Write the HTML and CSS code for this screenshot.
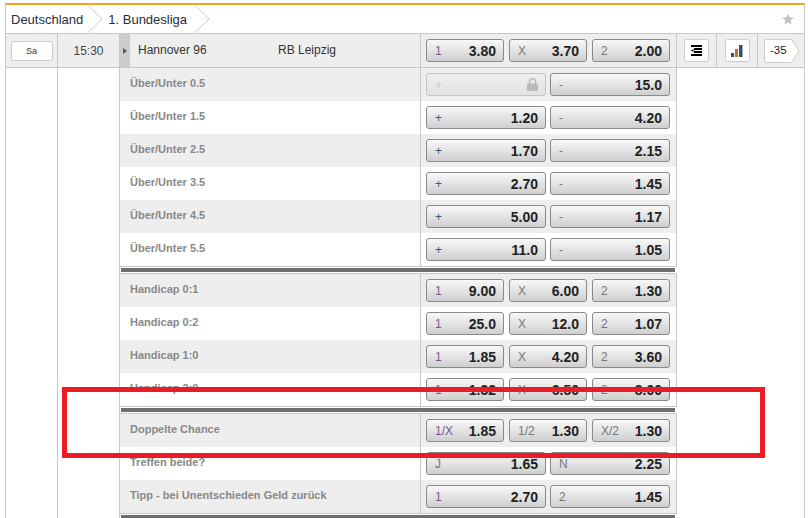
FILE: index.html
```html
<!DOCTYPE html>
<html lang="de">
<head>
<meta charset="utf-8">
<title>1. Bundesliga</title>
<link rel="stylesheet" href="styles.css">
</head>
<body>
<div class="panel">
  <div class="crumbs">
    <span class="crumb">Deutschland</span>
    <svg class="chev" width="16" height="28" viewBox="0 0 16 28"><path d="M0.500 0 L15 14 L0.500 28" fill="none" stroke="#ccc"/></svg>
    <span class="crumb">1. Bundesliga</span>
    <svg class="chev" width="16" height="28" viewBox="0 0 16 28"><path d="M0.500 0 L15 14 L0.500 28" fill="none" stroke="#ccc"/></svg>
    <svg class="star" width="12" height="12" viewBox="0 0 14 14"><path d="M7 0.500 L8.900 5 L13.800 5.400 L10.100 8.600 L11.200 13.500 L7 10.900 L2.800 13.500 L3.900 8.600 L0.200 5.400 L5.100 5 Z" fill="#c0c2c6"/></svg>
  </div>
  <div class="match">
    <div class="c-day"><span class="day">Sa</span></div>
    <div class="c-time">15:30</div>
    <div class="c-tog"><span class="tri"></span></div>
    <div class="c-teams"><span class="home">Hannover 96</span><span class="away">RB Leipzig</span></div>
    <div class="c-odds">
      <div class="btn"><span class="k one">1</span><b>3.80</b></div>
      <div class="btn"><span class="k">X</span><b>3.70</b></div>
      <div class="btn"><span class="k">2</span><b>2.00</b></div>
    </div>
    <div class="c-icon"><span class="ibtn"><svg width="11" height="11" viewBox="0 0 11 11"><path d="M0 0h11v2H0zM3 3h8v2H3zM3 6h8v2H3zM0 9h11v2H0z" fill="#000"/><path d="M0 5.500l2.500-1.500v3z" fill="#000"/></svg></span></div>
    <div class="c-icon c-chart"><span class="ibtn"><svg width="12" height="12" viewBox="0 0 12 12"><rect x="0" y="8" width="3" height="4" fill="#3a5068"/><rect x="4" y="4" width="3" height="8" fill="#b5752e"/><rect x="8" y="0" width="3.500" height="12" fill="#3a5068"/></svg></span></div>
    <div class="c-more"><span class="more"><svg class="tag" width="36" height="24" viewBox="0 0 36 24"><path d="M2.500.5H27.500L35 12 27.500 23.500H2.500a2 2 0 0 1-2-2v-19a2 2 0 0 1 2-2z" fill="#fff" stroke="#ccc"/></svg><span class="more-txt">-35</span></span></div>
  </div>
  <div class="body">
    <div class="gutter g1"></div>
    <div class="gutter g2"></div>
    <div class="markets">
      <div class="group">
        <div class="row"><div class="lbl">Über/Unter 0.5</div><div class="odds two"><div class="btn off"><span class="k">+</span><svg width="11" height="13" viewBox="0 0 11 13"><path d="M2.500 6V3.500a3 3 0 0 1 6 0V6" fill="none" stroke="#bbb" stroke-width="1.500"/><rect x="0" y="5.500" width="11" height="7.500" rx="1" fill="#bbb"/></svg></div><div class="btn"><span class="k">-</span><b>15.0</b></div></div></div>
        <div class="row"><div class="lbl">Über/Unter 1.5</div><div class="odds two"><div class="btn"><span class="k plus">+</span><b>1.20</b></div><div class="btn"><span class="k">-</span><b>4.20</b></div></div></div>
        <div class="row"><div class="lbl">Über/Unter 2.5</div><div class="odds two"><div class="btn"><span class="k plus">+</span><b>1.70</b></div><div class="btn"><span class="k">-</span><b>2.15</b></div></div></div>
        <div class="row"><div class="lbl">Über/Unter 3.5</div><div class="odds two"><div class="btn"><span class="k plus">+</span><b>2.70</b></div><div class="btn"><span class="k">-</span><b>1.45</b></div></div></div>
        <div class="row"><div class="lbl">Über/Unter 4.5</div><div class="odds two"><div class="btn"><span class="k plus">+</span><b>5.00</b></div><div class="btn"><span class="k">-</span><b>1.17</b></div></div></div>
        <div class="row"><div class="lbl">Über/Unter 5.5</div><div class="odds two"><div class="btn"><span class="k plus">+</span><b>11.0</b></div><div class="btn"><span class="k">-</span><b>1.05</b></div></div></div>
      </div>
      <div class="group">
        <div class="row"><div class="lbl">Handicap 0:1</div><div class="odds"><div class="btn"><span class="k one">1</span><b>9.00</b></div><div class="btn"><span class="k">X</span><b>6.00</b></div><div class="btn"><span class="k">2</span><b>1.30</b></div></div></div>
        <div class="row"><div class="lbl">Handicap 0:2</div><div class="odds"><div class="btn"><span class="k one">1</span><b>25.0</b></div><div class="btn"><span class="k">X</span><b>12.0</b></div><div class="btn"><span class="k">2</span><b>1.07</b></div></div></div>
        <div class="row"><div class="lbl">Handicap 1:0</div><div class="odds"><div class="btn"><span class="k one">1</span><b>1.85</b></div><div class="btn"><span class="k">X</span><b>4.20</b></div><div class="btn"><span class="k">2</span><b>3.60</b></div></div></div>
        <div class="row"><div class="lbl">Handicap 2:0</div><div class="odds"><div class="btn"><span class="k one">1</span><b>1.32</b></div><div class="btn"><span class="k">X</span><b>6.50</b></div><div class="btn"><span class="k">2</span><b>8.00</b></div></div></div>
      </div>
      <div class="group">
        <div class="row"><div class="lbl">Doppelte Chance</div><div class="odds"><div class="btn"><span class="k one">1/X</span><b>1.85</b></div><div class="btn"><span class="k">1/2</span><b>1.30</b></div><div class="btn"><span class="k">X/2</span><b>1.30</b></div></div></div>
        <div class="row"><div class="lbl">Treffen beide?</div><div class="odds two"><div class="btn"><span class="k">J</span><b>1.65</b></div><div class="btn"><span class="k">N</span><b>2.25</b></div></div></div>
        <div class="row"><div class="lbl">Tipp - bei Unentschieden Geld zurück</div><div class="odds two"><div class="btn"><span class="k one">1</span><b>2.70</b></div><div class="btn"><span class="k">2</span><b>1.45</b></div></div></div>
      </div>
    </div>
  </div>
</div>
<div class="highlight"></div>
</body>
</html>
```
FILE: styles.css
```css
* { box-sizing: border-box; }
html, body { margin: 0; height: 518px; overflow: hidden; background: #fff; }
body { padding: 3px 3px 0 5px; font-family: "Liberation Sans", Arial, sans-serif; position: relative; }
.panel { width: 800px; height: 515px; border-top: 2px solid #f5a31a; border-left: 1px solid #c8c8c8; border-right: 1px solid #c8c8c8; overflow: hidden; }
.crumbs { height: 29px; display: flex; align-items: center; border-bottom: 1px solid #c8c8c8; font-size: 13px; color: #22303c; }
.crumb { padding-left: 5px; padding-right: 3px; }
.crumb:first-child { padding-right: 0; }
.chev { margin-left: 4px; align-self: flex-start; }
.star { margin-left: auto; margin-right: 10px; }
.match { height: 34px; display: flex; background: #eee; border-bottom: 1px solid #c8c8c8; }
.c-day { width: 52px; border-right: 1px solid #c8c8c8; display: flex; align-items: center; justify-content: center; }
.day { width: 42px; height: 20px; background: #fff; border: 1px solid #ccc; border-radius: 3px; font-size: 9px; line-height: 18px; text-align: center; color: #333; }
.c-time { width: 62px; border-right: 1px solid #c8c8c8; font-size: 12px; color: #444; text-align: center; line-height: 34px; }
.c-tog { width: 10px; background: #ccc; display: flex; align-items: center; justify-content: center; }
.tri { width: 0; height: 0; border-left: 4px solid #555; border-top: 3.500px solid transparent; border-bottom: 3.500px solid transparent; }
.c-teams { width: 291px; border-right: 1px solid #c8c8c8; display: flex; font-size: 12px; color: #333; line-height: 32px; padding-left: 8px; }
.home { width: 140px; }
.c-odds { width: 256px; border-right: 1px solid #c8c8c8; display: flex; gap: 5px; padding: 5px 6px 0 5px; }
.c-icon { width: 40px; border-right: 1px solid #c8c8c8; display: flex; align-items: center; justify-content: center; }
.c-chart { width: 41px; }
.ibtn { width: 25px; height: 23px; background: #fff; border: 1px solid #ccc; border-radius: 3px; display: flex; align-items: center; justify-content: center; }
.c-more { flex: 1; display: flex; align-items: center; padding-left: 6px; }
.more { display: block; width: 36px; height: 24px; font-size: 11.500px; line-height: 23px; color: #222; position: relative; }
.tag { position: absolute; left: 0; top: 0; }
.more-txt { position: relative; padding-left: 6px; }
.body { display: flex; height: 450px; }
.gutter { border-right: 1px solid #c8c8c8; }
.g1 { width: 52px; }
.g2 { width: 62px; }
.markets { width: 557px; }
.group { border-bottom: 1px solid #c8c8c8; position: relative; padding-bottom: 7px; }
.group::after { content: ""; position: absolute; left: 1px; right: 2px; bottom: 1px; height: 4px; background: #6e6e6e; }
.group::before { content: ""; position: absolute; left: 0; right: 0; bottom: 6px; height: 1px; background: #c8c8c8; }
.row { height: 33px; display: flex; border-right: 1px solid #c8c8c8; }
.row:nth-child(odd) { background: #eee; }
.lbl { width: 301px; padding-left: 10px; border-right: 1px solid #c8c8c8; font-size: 11px; font-weight: bold; color: #888; line-height: 30px; }
.odds { width: 255px; display: flex; gap: 5px; padding: 5px 6px 0 5px; }
.odds.two { gap: 4px; }
.btn { flex: 1; height: 23px; border: 1px solid #8a8a8a; border-radius: 3px; background: linear-gradient(#f8f8f8, #cfcfcf); display: flex; align-items: center; justify-content: space-between; padding: 0 7px 0 8px; font-size: 12px; color: #777; }
.btn b { font-size: 14px; color: #222; }
.k { color: #777; }
.k.one { color: #7d5a88; }
.k.plus { color: #3c5a7a; }
.btn.off { border-color: #c4c4c4; background: linear-gradient(#eee, #e2e2e2); color: #bbb; }
.btn.off .k { color: #ccc; }
.highlight { position: absolute; left: 62px; top: 387px; width: 703px; height: 71px; border: 5px solid #ed1c24; pointer-events: none; }
```
